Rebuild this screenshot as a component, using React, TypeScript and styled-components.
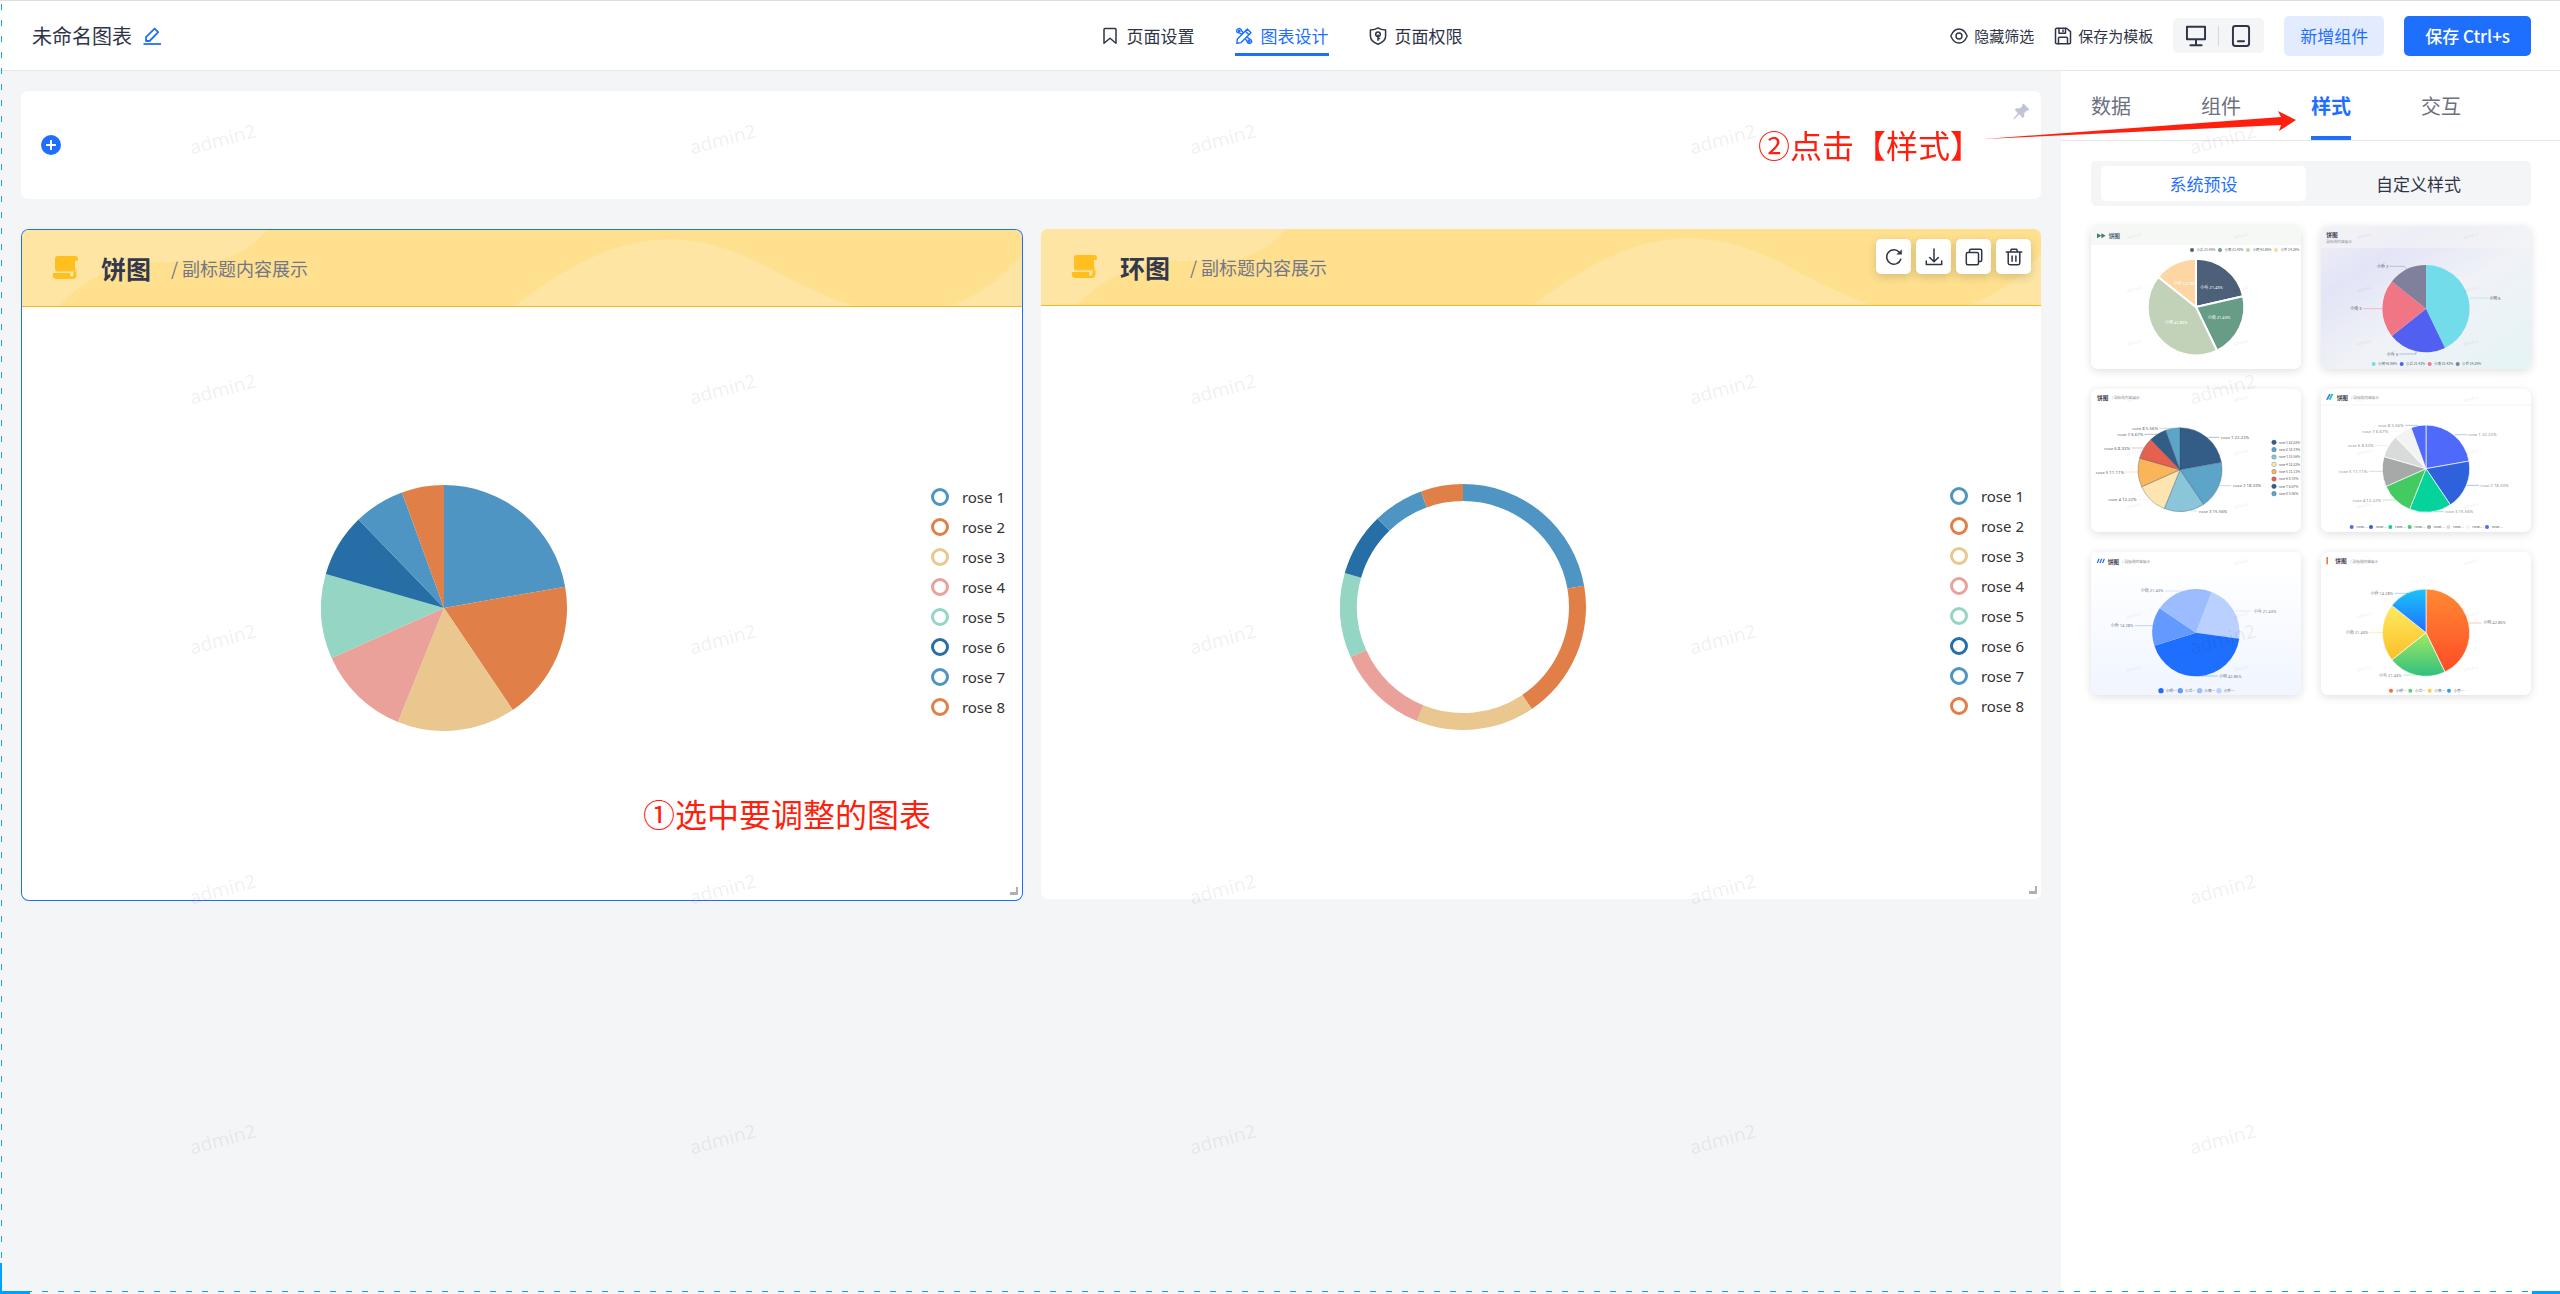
import React from "react";
import styled, { createGlobalStyle } from "styled-components";

const BLUE = "#1f6fff";
const INK = "#2f3447";
const FONT = `"Noto Sans", "Noto Sans CJK SC", sans-serif`;
const CJK = `"Noto Sans CJK SC", "Noto Sans", sans-serif`;

const Global = createGlobalStyle`
  * { box-sizing: border-box; }
  body { margin: 0; font-family: ${CJK}; color: ${INK}; background: #f4f5f7; }
  button { font-family: inherit; color: inherit; border: 0; padding: 0; background: none; cursor: pointer; }
  a { color: inherit; text-decoration: none; }
  svg { display: block; flex: none; }
`;

/* ---------- page frame ---------- */

const Page = styled.div`
  position: relative;
  min-height: 100vh;
  display: flex;
  flex-direction: column;
  border-top: 1px solid #dedede;
  overflow: hidden;
`;

const TopBar = styled.header`
  height: 70px;
  display: grid;
  grid-template-columns: 1fr auto 1fr;
  align-items: center;
  padding: 0 29px 0 32px;
  background: #fff;
  border-bottom: 1px solid #e6e7ea;
`;

const TitleGroup = styled.div`
  display: flex;
  align-items: center;
  gap: 10px;
`;

const PageTitle = styled.h1`
  margin: 0;
  font-size: 20px;
  line-height: 30px;
  font-weight: 400;
`;

const Nav = styled.nav`
  display: flex;
  gap: 40px;
`;

const NavLink = styled.a<{ $active?: boolean }>`
  height: 40px;
  display: flex;
  align-items: center;
  gap: 8px;
  font-size: 17px;
  line-height: 28px;
  border-top: 3px solid transparent;
  border-bottom: 3px solid ${(p) => (p.$active ? BLUE : "transparent")};
  color: ${(p) => (p.$active ? BLUE : INK)};
`;

const Tools = styled.div`
  display: flex;
  align-items: center;
  justify-content: flex-end;
  gap: 20px;
`;

const ToolButton = styled.button`
  display: flex;
  align-items: center;
  gap: 6px;
  font-size: 15px;
  line-height: 24px;
`;

const DeviceSwitch = styled.div`
  height: 35px;
  display: flex;
  align-items: center;
  padding: 0 1px;
  border-radius: 5px;
  background: #f4f5f7;
`;

const DeviceButton = styled.button`
  width: 44px;
  display: flex;
  justify-content: center;
`;

const Divider = styled.span`
  width: 1px;
  height: 20px;
  background: #d5d8de;
`;

const ActionButton = styled.button<{ $primary?: boolean }>`
  height: 40px;
  padding: 0 ${(p) => (p.$primary ? 21 : 16)}px;
  border-radius: 5px;
  font-size: 17px;
  font-weight: ${(p) => (p.$primary ? 500 : 400)};
  color: ${(p) => (p.$primary ? "#fff" : BLUE)};
  background: ${(p) => (p.$primary ? BLUE : "#e3ecff")};
`;

const Body = styled.div`
  flex: 1;
  display: flex;
`;

/* ---------- canvas ---------- */

const Canvas = styled.main`
  flex: 1;
  min-width: 0;
  display: flex;
  flex-direction: column;
  gap: 30px;
  padding: 20px 20px 20px 21px;
`;

const FilterCard = styled.section`
  position: relative;
  height: 108px;
  display: flex;
  align-items: center;
  padding: 0 20px;
  border-radius: 7px;
  background: #fff;
`;

const PinButton = styled.button`
  position: absolute;
  top: 12px;
  right: 11px;
`;

const Charts = styled.div`
  display: grid;
  grid-template-columns: 1fr 1fr;
  gap: 19px;
  align-items: start;
  padding-left: 1px;
`;

const Card = styled.section<{ $selected?: boolean }>`
  position: relative;
  margin-top: ${(p) => (p.$selected ? 1 : 0)}px;
  border-radius: 7px;
  background: #fff;
  box-shadow: ${(p) => (p.$selected ? `0 0 0 1px ${BLUE}` : "none")};
  overflow: hidden;
`;

const CardHead = styled.header`
  position: relative;
  height: 77px;
  display: flex;
  align-items: center;
  padding: 0 30px;
  background: #fee08f;
  border-bottom: 1px solid #fbb41d;
`;

const WaveArt = styled.svg`
  position: absolute;
  top: 0;
  left: 0;
  width: 100%;
  height: 100%;
`;

const HeadText = styled.div`
  position: relative;
  display: flex;
  align-items: center;
`;

const CardTitle = styled.h2`
  margin: 0 20px 0 22px;
  font-size: 25px;
  line-height: 36px;
  font-weight: 700;
  color: #33384d;
`;

const CardSub = styled.p`
  margin: 0;
  font-size: 18px;
  line-height: 28px;
  color: #737789;
`;

const CardActions = styled.div`
  position: absolute;
  top: 10px;
  right: 10px;
  display: flex;
  gap: 5px;
`;

const SquareButton = styled.button`
  width: 35px;
  height: 35px;
  display: grid;
  place-items: center;
  border-radius: 5px;
  background: #fff;
  box-shadow: 0 3px 10px rgba(60, 50, 10, 0.2);
`;

const CardBody = styled.div`
  height: 593px;
  display: flex;
  align-items: center;
  padding: 0 17px 4px 0;
`;

const Plot = styled.div`
  flex: 1;
  display: flex;
  justify-content: center;
  padding: 13px 64px 0 0;
`;

const Legend = styled.ul`
  margin: 0;
  padding: 0;
  list-style: none;
  font-family: ${FONT};
`;

const LegendItem = styled.li`
  height: 30px;
  display: flex;
  align-items: center;
  gap: 13px;
  font-size: 15px;
  line-height: 20px;
  color: #333;
`;

const Ring = styled.span<{ $color: string }>`
  width: 18px;
  height: 18px;
  border-radius: 50%;
  border: 3px solid ${(p) => p.$color};
`;

const Grip = styled.span`
  position: absolute;
  right: 4px;
  bottom: 5px;
  width: 8px;
  height: 8px;
  border-right: 2px solid #b0b0b0;
  border-bottom: 3px solid #b0b0b0;
`;

/* ---------- style panel ---------- */

const Panel = styled.aside`
  width: 499px;
  background: #fff;
`;

const PanelTabs = styled.div`
  height: 70px;
  display: flex;
  align-items: stretch;
  gap: 70px;
  padding: 0 30px;
  border-bottom: 1px solid #e6e7ea;
`;

const PanelTab = styled.button<{ $active?: boolean }>`
  font-size: 20px;
  font-weight: ${(p) => (p.$active ? 700 : 400)};
  color: ${(p) => (p.$active ? BLUE : "#6c7080")};
  border-top: 4px solid transparent;
  border-bottom: 4px solid ${(p) => (p.$active ? BLUE : "transparent")};
`;

const PanelBody = styled.div`
  display: flex;
  flex-direction: column;
  gap: 20px;
  padding: 20px 29px 20px 30px;
`;

const Segmented = styled.div`
  height: 45px;
  display: grid;
  grid-template-columns: 1fr 1fr;
  gap: 10px;
  padding: 5px 10px;
  border-radius: 5px;
  background: #f4f5f7;
`;

const Segment = styled.button<{ $active?: boolean }>`
  font-size: 17px;
  border-radius: 5px;
  background: ${(p) => (p.$active ? "#fff" : "none")};
  color: ${(p) => (p.$active ? BLUE : INK)};
`;

const Presets = styled.div`
  display: grid;
  grid-template-columns: 1fr 1fr;
  gap: 20px;
`;

const Preset = styled.button`
  height: 143px;
  border-radius: 7px;
  overflow: hidden;
  background: #fff;
  box-shadow: 0 2px 10px rgba(0, 0, 0, 0.13);
`;

const PresetArt = styled.svg`
  width: 100%;
  height: 100%;
  font-family: ${CJK};
`;

/* ---------- overlays ---------- */

const Watermarks = styled.div`
  position: absolute;
  inset: 0;
  display: grid;
  grid-template-columns: repeat(5, 500px);
  grid-auto-rows: 250px;
  padding: 124px 0 0 189px;
  overflow: hidden;
  pointer-events: none;
`;

const Mark = styled.span`
  justify-self: start;
  align-self: start;
  font-family: ${FONT};
  font-size: 19px;
  line-height: 28px;
  color: rgba(0, 0, 0, 0.06);
  transform: rotate(-15deg);
`;

const Note = styled.p`
  margin: 0;
  font-size: 32px;
  line-height: 40px;
  color: #ff1f0f;
  white-space: nowrap;
`;

const ChartNote = styled(Note)`
  position: absolute;
  right: 91px;
  bottom: 67px;
`;

const TabCallout = styled.div`
  position: absolute;
  top: 109px;
  right: 264px;
  display: flex;
  pointer-events: none;
`;

const CalloutText = styled(Note)`
  padding-top: 14px;
`;

const LeftDashes = styled.div`
  position: absolute;
  left: 1px;
  top: 3px;
  bottom: 0;
  width: 1px;
  background: repeating-linear-gradient(180deg, #1a9fe8 0 6px, transparent 6px 16px);
`;

const BottomDashes = styled.div`
  position: absolute;
  left: 10px;
  right: 0;
  bottom: 2px;
  height: 1px;
  background: repeating-linear-gradient(90deg, #0a9ffb 0 6px, transparent 6px 16px);
`;

const Corner = styled.div<{ $side: "left" | "right" }>`
  position: absolute;
  bottom: 0;
  ${(p) => p.$side}: 0;
  width: ${(p) => (p.$side === "left" ? 30 : 28)}px;
  height: ${(p) => (p.$side === "left" ? 31 : 3)}px;
  border-bottom: 3px solid #00a0ff;
  border-left: ${(p) => (p.$side === "left" ? "2px solid #00a0ff" : "0")};
`;

/* ---------- icons ---------- */

const Icon = ({ size = 18, width = 1.5, children }: { size?: number; width?: number; children: React.ReactNode }) => (
  <svg width={size} height={size} viewBox="0 0 18 18" fill="none" stroke="currentColor" strokeWidth={width} strokeLinecap="round" strokeLinejoin="round" aria-hidden="true">
    {children}
  </svg>
);

const EditIcon = () => (
  <svg width="20" height="20" viewBox="0 0 20 20" fill="none" stroke={BLUE} strokeWidth="1.8" strokeLinejoin="round" aria-hidden="true">
    <path d="M4 15V11.2L12.6 2.6L16.2 6.2L7.6 15Z" />
    <path d="M1.5 18H19" />
  </svg>
);
const BookmarkIcon = () => (
  <Icon><path d="M3 2.6Q3 1.5 4 1.5H14Q15 1.5 15 2.6V16.3L9 11.2L3 16.3Z" /></Icon>
);
const DesignIcon = () => (
  <Icon width={1.4}>
    <path d="M12.3 2L16 5.7L6 15.6L1.8 16.3L2.4 12Z" />
    <path d="M10.3 4.2L13.8 7.6" />
    <path d="M6.9 7.2L2 5.2Q.8 2.6 3.6 1.6Q6 1.3 6.6 3.7L8.2 5.7" />
    <path d="M10.8 12.4L12.8 15.8Q15 17.2 16.6 15Q17 12.6 14.6 11.8L12.6 10.6" />
    <circle cx="4.2" cy="4" r=".8" />
    <circle cx="14" cy="14" r="1" />
  </Icon>
);
const ShieldIcon = () => (
  <Icon>
    <path d="M9 .9C11 2.4 13.5 2.9 16.6 3V9C16.6 13 13 15.8 9 17.2C5 15.8 1.4 13 1.4 9V3C4.500 2.9 7 2.4 9 .9Z" />
    <circle cx="9" cy="7.3" r="2.3" />
    <path d="M9 8V13.2M9 11.4H10.6" />
  </Icon>
);
const EyeIcon = () => (
  <Icon width={1.4}>
    <path d="M.8 9C2.6 4.6 5.5 2 9 2S15.4 4.6 17.2 9C15.4 13.4 12.5 16 9 16S2.6 13.4 .8 9Z" />
    <circle cx="9" cy="9" r="3" />
  </Icon>
);
const SaveIcon = () => (
  <Icon>
    <path d="M1.5 2.5Q1.5 1.2 2.8 1.2H12.5L16.5 4.6V15.5Q16.5 16.8 15.2 16.8H2.8Q1.5 16.8 1.5 15.5Z" />
    <path d="M5 1.5V6.3H11.5V1.5M9 3V4.6" />
    <path d="M4.5 16.5V11.3Q4.5 10.3 5.5 10.3H12.5Q13.5 10.3 13.5 11.3V16.5" />
  </Icon>
);
const MonitorIcon = () => (
  <Icon size={22} width={1.6}>
    <path d="M1.6 1.4H16.4V11.7H1.6ZM9 11.7V16.4M4.4 16.5H13.6" />
  </Icon>
);
const TabletIcon = () => (
  <Icon size={22} width={1.6}>
    <rect x="2.4" y=".9" width="13.2" height="16.2" rx="2" />
    <path d="M6.5 13.3H11.5" />
  </Icon>
);
const PlusIcon = () => (
  <svg width="20" height="20" viewBox="0 0 20 20" aria-hidden="true">
    <circle cx="10" cy="10" r="10" fill={BLUE} />
    <path d="M10 5V15M5 10H15" stroke="#fff" strokeWidth="2" />
  </svg>
);
const PinIcon = () => (
  <svg width="17" height="17" viewBox="0 0 17 17" fill="#c0c3d0" aria-hidden="true">
    <path d="M10.5 .4L16.3 6.5L14.8 7.7L13.8 7.5L11.2 10.3L11.3 13.6L9.8 15L6.3 11.3L1.2 16.3L.4 15.6L5 10.3L1.8 6.8L3.3 5.3L6.7 5.5L9.4 3L9.2 1.8Z" />
  </svg>
);
const ScrollIcon = () => (
  <svg width="27" height="27" viewBox="0 0 27 27" fill="#ffbf1f" aria-hidden="true">
    <path d="M6 1H23Q26 1 26 4Q26 6 24.8 6H23V15.8H5Q3 15.8 3 13.5V4Q3 1 6 1Z" />
    <path d="M1.5 18H18V19.5Q18 21.8 20 21.8Q21.6 21.8 21.6 19.5V16.5H24.4V20Q24.4 24 20.5 24H4.5Q.8 24 .8 20V18.7Q.8 18 1.5 18Z" />
    <path d="M3 13H24.400V19Q24.400 22 21.600 22V17H5Q3 17 3 15Z" opacity=".5" />
  </svg>
);
const RefreshIcon = () => (
  <Icon>
    <path d="M15.8 11.2A7.2 7.2 0 1 1 14.3 4.2" />
    <path d="M16.6 2.2V6.2H12.2Z" fill="currentColor" strokeWidth=".5" />
  </Icon>
);
const DownloadIcon = () => (
  <Icon><path d="M9 1V13.5M4.7 9.5L9 13.8L13.3 9.5M1.3 13V16.6H16.7V13" /></Icon>
);
const CopyIcon = () => (
  <Icon>
    <rect x="1.3" y="4.5" width="12.2" height="12.2" rx="1.5" />
    <path d="M4.5 4.3V2.8Q4.5 1.3 6 1.3H15.2Q16.7 1.3 16.7 2.8V12Q16.7 13.5 15.2 13.5H13.8" />
  </Icon>
);
const TrashIcon = () => (
  <Icon><path d="M1.3 4H16.7M5.5 3.8L6.3 1.3H11.7L12.5 3.8M3.2 4.2V15Q3.2 16.7 4.9 16.7H13.1Q14.8 16.7 14.8 15V4.2M7.1 8V13.2M10.9 8V13.2" /></Icon>
);

const Waves = () => (
  <WaveArt viewBox="0 0 1000 76" preserveAspectRatio="none" fill="#fee5a3" aria-hidden="true">
    <path d="M0 0H245Q218 31 180 32H134Q76 34 36 76H0Z" />
    <path d="M493 76C596 -4 666 -8 755 42C790 60 812 70 831 76Z" />
    <path d="M928 76C960 64 980 48 1000 24V76Z" />
  </WaveArt>
);

/* ---------- charts ---------- */

const ROSE = [40, 33, 28, 22, 20, 15, 12, 10];
const ROSE_COLORS = ["#4e95c3", "#e07f48", "#e9c78f", "#e9a19a", "#94d5c3", "#256ea6", "#4e95c3", "#e07f48"];

interface SliceProps {
  values: number[];
  colors: string[];
  cx: number;
  cy: number;
  r: number;
  inner?: number;
  start?: number;
  stroke?: string;
  strokeWidth?: number;
}

const Slices = ({ values, colors, cx, cy, r, inner = 0, start = 0, stroke, strokeWidth }: SliceProps) => {
  const total = values.reduce((a, b) => a + b, 0);
  let sum = 0;
  const at = (deg: number, rad: number) => {
    const t = (deg * Math.PI) / 180;
    return `${(cx + rad * Math.sin(t)).toFixed(2)} ${(cy - rad * Math.cos(t)).toFixed(2)}`;
  };
  return (
    <g stroke={stroke} strokeWidth={strokeWidth} strokeLinejoin="round">
      {values.map((v, i) => {
        const a = start + (sum / total) * 360;
        sum += v;
        const b = start + (sum / total) * 360;
        const big = b - a > 180 ? 1 : 0;
        const back = inner ? `L${at(b, inner)}A${inner} ${inner} 0 ${big} 0 ${at(a, inner)}` : `L${cx} ${cy}`;
        return <path key={i} d={`M${at(a, r)}A${r} ${r} 0 ${big} 1 ${at(b, r)}${back}Z`} fill={colors[i]} />;
      })}
    </g>
  );
};

const ChartCard = ({ title, inner, selected, children }: { title: string; inner?: number; selected?: boolean; children?: React.ReactNode }) => (
  <Card $selected={selected}>
    <CardHead>
      <Waves />
      <HeadText>
        <ScrollIcon />
        <CardTitle>{title}</CardTitle>
        <CardSub>/ 副标题内容展示</CardSub>
      </HeadText>
    </CardHead>
    <CardBody>
      <Plot>
        <svg width="246" height="246" viewBox="0 0 246 246" role="img" aria-label={title}>
          <Slices values={ROSE} colors={ROSE_COLORS} cx={123} cy={123} r={123} inner={inner} />
        </svg>
      </Plot>
      <Legend>
        {ROSE_COLORS.map((c, i) => (
          <LegendItem key={i}>
            <Ring $color={c} />
            rose {i + 1}
          </LegendItem>
        ))}
      </Legend>
    </CardBody>
    <Grip />
    {children}
  </Card>
);

/* ---------- preset thumbnails, drawn on a 630 x 429 board ---------- */

type Tag = { t: string; x: number; y: number; left?: boolean; line?: string; c?: string };

const Tags = ({ items, fill = "#555a66", size = 13 }: { items: Tag[]; fill?: string; size?: number }) => (
  <g fontSize={size} fontFamily={FONT}>
    {items.map((l, i) => (
      <g key={i}>
        {l.line && <path d={l.line} stroke={l.c} strokeWidth="2" fill="none" opacity=".6" />}
        <text x={l.x} y={l.y + 5} fill={fill} textAnchor={l.left ? "end" : "start"}>{l.t}</text>
      </g>
    ))}
  </g>
);

const Dots = ({ names, colors, x, y, step, r = 6, size = 11 }: { names: string[]; colors: string[]; x: number; y: number; step: number; r?: number; size?: number }) => (
  <g fontSize={size} fill="#555a66">
    {names.map((n, i) => (
      <g key={i}>
        <circle cx={x + i * step} cy={y} r={r} fill={colors[i]} />
        <text x={x + i * step + 14} y={y + 4}>{n}</text>
      </g>
    ))}
  </g>
);

const ThumbMarks = () => (
  <g fontSize="13" fill="#000" opacity=".08">
    {[40, 200, 360].map((y) =>
      [108, 428].map((x) => (
        <text key={`${x}-${y}`} x={x} y={y} transform={`rotate(-15 ${x} ${y})`}>admin2</text>
      ))
    )}
  </g>
);

const Heading = ({ x, y = 32, sub, subX = 0, subY = 30, color = "#3b4050" }: { x: number; y?: number; sub?: string; subX?: number; subY?: number; color?: string }) => (
  <g>
    <text x={x} y={y} fontSize="17" fontWeight="700" fill={color}>饼图</text>
    {sub && <text x={subX} y={subY} fontSize="11" fill="#8a8e9a">{sub}</text>}
  </g>
);

const SUB = "/ 副标题内容展示";
const FOUR = [42.86, 21.43, 21.43, 14.28];
const BLUES = ["#335d87", "#5da5c8", "#8ac5da", "#fde4b1", "#fab45a", "#e66050", "#335d87", "#5da5c8"];
const FRESH = ["#4f6afa", "#2f61dc", "#06d39b", "#43cb62", "#a7a9a9", "#d9dada", "#f3f3f3", "#4f6afa"];
const PASTEL = ["#4c6079", "#679d86", "#c2d2b8", "#fdd6a4"];
const NEON = ["#72dcea", "#5160f0", "#f07686", "#80809a"];
const TINTS = ["#bad1ff", "#1f6fff", "#649aff", "#9bbcff"];
const SHORT = ["小明…", "小兵…", "小南…", "小乔…"];
const PERCENT = ["22.22%", "18.33%", "15.56%", "12.22%", "11.11%", "8.33%", "6.67%", "5.56%"];

const thumbs = [
  <>
    <rect width="630" height="57" fill="#f6f8f6" />
    <path d="M18 22L31 29L18 37ZM31 22L44 29L31 37Z" fill="#3f7a70" />
    <Heading x={53} y={37} color="#506078" />
    <Dots names={["小兵 21.43%", "小南 21.43%", "小明 42.86%", "小乔 14.28%"]} colors={PASTEL} x={303} y={72} step={84} size={10} />
    <Slices values={[21.43, 21.43, 42.86, 14.28]} colors={PASTEL} cx={315} cy={243} r={145} stroke="#fff" strokeWidth={6} />
    <Tags fill="#fff" size={12} items={[
      { t: "小兵 21.43%", x: 328, y: 183 }, { t: "小南 21.43%", x: 350, y: 275 },
      { t: "小明 42.86%", x: 222, y: 289 }, { t: "小乔 14.28%", x: 248, y: 173 },
    ]} />
  </>,
  <>
    <defs>
      <linearGradient id="mist" x1="0" y1="0" x2="1" y2="1">
        <stop offset="0" stopColor="#f0f0f6" /><stop offset=".25" stopColor="#e3e4f6" />
        <stop offset=".55" stopColor="#f0f2f7" /><stop offset="1" stopColor="#e5f4f6" />
      </linearGradient>
    </defs>
    <rect width="630" height="429" fill="url(#mist)" />
    <rect width="630" height="66" fill="#f5f5f7" opacity=".6" />
    <Heading x={16} sub="副标题内容展示" subX={16} subY={52} />
    <Slices values={FOUR} colors={NEON} cx={315} cy={248} r={131} />
    <Tags size={12} items={[
      { t: "小明 6", x: 505, y: 216, line: "M447 216H501", c: "#72dcea" },
      { t: "小乔 2", x: 202, y: 121, left: true, line: "M205 121H250L258 130", c: "#80809a" },
      { t: "小南 3", x: 122, y: 248, left: true, line: "M126 248H184", c: "#f07686" },
      { t: "小兵 3", x: 231, y: 384, left: true, line: "M234 384H285V377", c: "#5160f0" },
    ]} />
    <Dots names={["小明 42.86%", "小兵 21.43%", "小南 21.43%", "小乔 14.28%"]} colors={NEON} x={158} y={414} step={84} size={10} />
  </>,
  <>
    <Heading x={18} sub={SUB} subX={62} />
    <Slices values={ROSE} colors={BLUES} cx={267} cy={242} r={126} stroke="#2d4a66" strokeWidth={1} />
    <Tags items={[
      { t: "rose 1 22.22%", x: 390, y: 145, line: "M352 145H386", c: BLUES[0] },
      { t: "rose 2 18.33%", x: 426, y: 290, line: "M386 290H421", c: BLUES[1] },
      { t: "rose 3 15.56%", x: 324, y: 366, line: "M296 366H320", c: BLUES[2] },
      { t: "rose 4 12.22%", x: 137, y: 331, left: true, line: "M141 331H180", c: BLUES[3] },
      { t: "rose 5 11.11%", x: 99, y: 249, left: true, line: "M103 249H142", c: BLUES[4] },
      { t: "rose 6 8.33%", x: 117, y: 177, left: true, line: "M121 177H160", c: BLUES[5] },
      { t: "rose 7 6.67%", x: 157, y: 136, left: true, line: "M160 136H200", c: BLUES[6] },
      { t: "rose 8 5.56%", x: 201, y: 118, left: true, line: "M205 118H245", c: BLUES[7] },
    ]} />
    {BLUES.map((c, i) => (
      <g key={i} fontSize="10" fill="#555a66">
        <circle cx="549" cy={160 + i * 22} r="7" fill={c} stroke="#4a6078" />
        <text x="563" y={164 + i * 22}>rose {i + 1} {PERCENT[i]}</text>
      </g>
    ))}
  </>,
  <>
    <path d="M24 15H29L21 32H15Z" fill="#4f6afa" />
    <path d="M31 15H37L29 32H23Z" fill="#06d39b" />
    <Heading x={47} sub={SUB} subX={90} />
    <path d="M0 48H630" stroke="#eceef2" strokeWidth="2" />
    <Slices values={ROSE} colors={FRESH} cx={315} cy={239} r={131} stroke="#fff" strokeWidth={2} />
    <Tags fill="#8a8e9a" items={[
      { t: "rose 1 22.22%", x: 442, y: 137, line: "M402 137H438", c: FRESH[0] },
      { t: "rose 2 18.33%", x: 478, y: 289, line: "M438 289H474", c: FRESH[1] },
      { t: "rose 3 15.56%", x: 372, y: 368, line: "M340 368H368", c: FRESH[2] },
      { t: "rose 4 12.22%", x: 180, y: 333, left: true, line: "M184 333H222", c: FRESH[3] },
      { t: "rose 5 11.11%", x: 139, y: 247, left: true, line: "M143 247H184", c: FRESH[4] },
      { t: "rose 6 8.33%", x: 158, y: 170, left: true, line: "M162 170H200", c: FRESH[5] },
      { t: "rose 7 6.67%", x: 201, y: 127, left: true, line: "M205 127H240", c: FRESH[6] },
      { t: "rose 8 5.56%", x: 248, y: 109, left: true, line: "M252 109H290", c: FRESH[7] },
    ]} />
    <Dots names={FRESH.map(() => "rose…")} colors={FRESH} x={92} y={414} step={58} />
  </>,
  <>
    <defs>
      <linearGradient id="sky" x1="0" y1="0" x2="0" y2="1">
        <stop offset=".1" stopColor="#fff" /><stop offset="1" stopColor="#f0f5ff" />
      </linearGradient>
    </defs>
    <rect width="630" height="429" fill="url(#sky)" />
    <path d="M22 20H26L21 33H17ZM30 20H34L29 33H25ZM38 20H42L37 33H33Z" fill={BLUE} />
    <Heading x={50} y={35} sub={SUB} subX={94} subY={32} />
    <Slices values={[21.43, 42.86, 14.28, 21.43]} colors={TINTS} cx={315} cy={242} r={131} start={21} />
    <Tags fill="#777c8a" size={12} items={[
      { t: "小兵 21.43%", x: 488, y: 177, line: "M432 177H482", c: TINTS[0] },
      { t: "小明 42.86%", x: 384, y: 372, line: "M330 372H380", c: TINTS[1] },
      { t: "小乔 14.28%", x: 127, y: 221, left: true, line: "M131 221H186", c: TINTS[2] },
      { t: "小南 21.43%", x: 217, y: 116, left: true, line: "M222 117H272", c: TINTS[3] },
    ]} />
    <Dots names={SHORT} colors={[BLUE, "#649aff", "#9bbcff", "#bad1ff"]} x={210} y={416} step={58} r={8} />
  </>,
  <>
    <defs>
      {[["#ff8a34", "#fe4c26"], ["#a2ea60", "#30bf80"], ["#feea62", "#fcbf27"], ["#1cc4f7", "#1f6eff"]].map(([a, b], i) => (
        <linearGradient key={i} id={`warm${i}`} x1="0" y1="0" x2="0" y2="1">
          <stop offset="0" stopColor={a} /><stop offset="1" stopColor={b} />
        </linearGradient>
      ))}
    </defs>
    <rect x="16" y="15" width="5" height="22" fill="#f5783c" />
    <Heading x={43} y={34} sub={SUB} subX={88} subY={32} />
    <Slices values={FOUR} colors={["url(#warm0)", "url(#warm1)", "url(#warm2)", "url(#warm3)"]} cx={315} cy={242} r={131} stroke="#fff" strokeWidth={2} />
    <Tags fill="#777c8a" size={12} items={[
      { t: "小明 42.86%", x: 487, y: 212, line: "M443 213H482", c: "#fe7050" },
      { t: "小乔 14.28%", x: 216, y: 123, left: true, line: "M220 124H262", c: "#1f9eff" },
      { t: "小南 21.43%", x: 142, y: 242, left: true, line: "M146 242H186", c: "#fcd447" },
      { t: "小兵 21.43%", x: 242, y: 369, left: true, line: "M246 369H290", c: "#60d070" },
    ]} />
    <Dots names={SHORT} colors={["#fe6a30", "#60d070", "#fcd040", "#1f9eff"]} x={210} y={416} step={58} />
  </>,
];

/* ---------- app ---------- */

export default function App() {
  return (
    <Page>
      <Global />
      <TopBar>
        <TitleGroup>
          <PageTitle>未命名图表</PageTitle>
          <button type="button" aria-label="编辑"><EditIcon /></button>
        </TitleGroup>
        <Nav>
          <NavLink href="#settings"><BookmarkIcon />页面设置</NavLink>
          <NavLink href="#design" $active><DesignIcon />图表设计</NavLink>
          <NavLink href="#access"><ShieldIcon />页面权限</NavLink>
        </Nav>
        <Tools>
          <ToolButton type="button"><EyeIcon />隐藏筛选</ToolButton>
          <ToolButton type="button"><SaveIcon />保存为模板</ToolButton>
          <DeviceSwitch>
            <DeviceButton type="button" aria-label="电脑"><MonitorIcon /></DeviceButton>
            <Divider />
            <DeviceButton type="button" aria-label="平板"><TabletIcon /></DeviceButton>
          </DeviceSwitch>
          <ActionButton type="button">新增组件</ActionButton>
          <ActionButton type="button" $primary>保存 Ctrl+s</ActionButton>
        </Tools>
      </TopBar>

      <Body>
        <Canvas>
          <FilterCard>
            <button type="button" aria-label="添加"><PlusIcon /></button>
            <PinButton type="button" aria-label="固定"><PinIcon /></PinButton>
          </FilterCard>
          <Charts>
            <ChartCard title="饼图" selected>
              <ChartNote>①选中要调整的图表</ChartNote>
            </ChartCard>
            <ChartCard title="环图" inner={106}>
              <CardActions>
                <SquareButton type="button" aria-label="刷新"><RefreshIcon /></SquareButton>
                <SquareButton type="button" aria-label="下载"><DownloadIcon /></SquareButton>
                <SquareButton type="button" aria-label="复制"><CopyIcon /></SquareButton>
                <SquareButton type="button" aria-label="删除"><TrashIcon /></SquareButton>
              </CardActions>
            </ChartCard>
          </Charts>
        </Canvas>

        <Panel>
          <PanelTabs>
            <PanelTab type="button">数据</PanelTab>
            <PanelTab type="button">组件</PanelTab>
            <PanelTab type="button" $active>样式</PanelTab>
            <PanelTab type="button">交互</PanelTab>
          </PanelTabs>
          <PanelBody>
            <Segmented>
              <Segment type="button" $active>系统预设</Segment>
              <Segment type="button">自定义样式</Segment>
            </Segmented>
            <Presets>
              {thumbs.map((art, i) => (
                <Preset key={i} type="button">
                  <PresetArt viewBox="0 0 630 429">
                    {art}
                    <ThumbMarks />
                  </PresetArt>
                </Preset>
              ))}
            </Presets>
          </PanelBody>
        </Panel>
      </Body>

      <Watermarks aria-hidden="true">
        {Array.from({ length: 25 }, (_, i) => <Mark key={i}>admin2</Mark>)}
      </Watermarks>

      <TabCallout>
        <CalloutText>②点击【样式】</CalloutText>
        <svg width="314" height="32" viewBox="0 0 314 32" fill="#ff1f0f" aria-hidden="true">
          <path d="M2 29L299 7L296 1L314 10L297 21L299 15Z" />
        </svg>
      </TabCallout>

      <LeftDashes />
      <BottomDashes />
      <Corner $side="left" />
      <Corner $side="right" />
    </Page>
  );
}
